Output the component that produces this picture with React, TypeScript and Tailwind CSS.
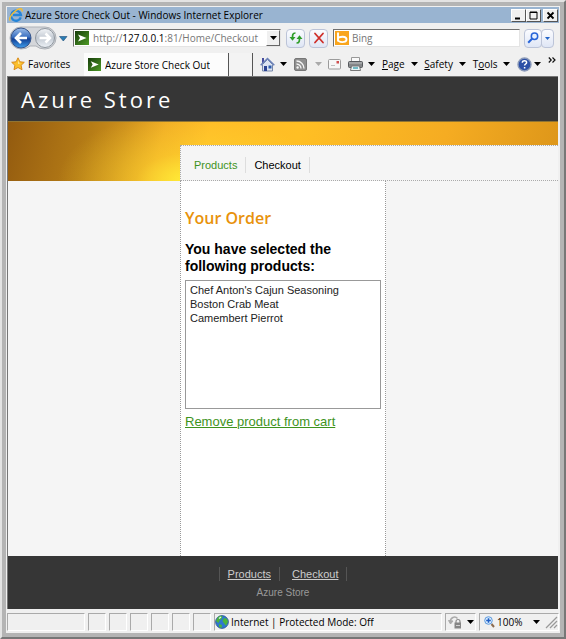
import type { ReactNode } from "react";

const ui = "font-['Open_Sans','Noto_Sans',sans-serif]";
const arial = "font-['Liberation_Sans',Arial,sans-serif]";

function Arrow({ className = "text-black" }: { className?: string }) {
  return (
    <svg width="7" height="4" viewBox="0 0 7 4" className={`shrink-0 ${className}`} aria-hidden="true">
      <path d="M0 0h7L3.5 4z" fill="currentColor" />
    </svg>
  );
}

function IeLogo() {
  return (
    <svg width="14" height="14" viewBox="0 0 14 14" className="shrink-0" aria-hidden="true">
      <path d="M11.8 9.3A5 5 0 1 1 12 7H4" fill="none" stroke="#2484d8" strokeWidth="2.3" />
      <path d="M1.2 12.5C-1 9.5 7 .2 12.3.8c1.2.4 1 1.8.5 2.7" fill="none" stroke="#f2bd32" strokeWidth="1.4" />
    </svg>
  );
}

function SiteIcon({ size }: { size: number }) {
  return (
    <svg width={size} height={size} viewBox="0 0 14 14" className="shrink-0" aria-hidden="true">
      <defs>
        <linearGradient id="site" x1="0" y1="0" x2="1" y2="1">
          <stop offset="0" stopColor="#173d0c" />
          <stop offset="1" stopColor="#4d9a25" />
        </linearGradient>
      </defs>
      <rect width="14" height="14" fill="url(#site)" />
      <path d="M3 3.5 11.5 7 3 10.5 5 7z" fill="#fff" />
    </svg>
  );
}

function HistoryButtons() {
  return (
    <svg width="60" height="24" viewBox="0 0 60 24" className="shrink-0" aria-hidden="true">
      <defs>
        <linearGradient id="back" x1="0" y1="0" x2="0" y2="1">
          <stop offset="0" stopColor="#9dbde8" />
          <stop offset=".45" stopColor="#3a6fc0" />
          <stop offset=".55" stopColor="#123f94" />
          <stop offset="1" stopColor="#3fa0ee" />
        </linearGradient>
        <linearGradient id="fwd" x1="0" y1="0" x2="0" y2="1">
          <stop offset="0" stopColor="#f2f4f7" />
          <stop offset=".5" stopColor="#c3cad3" />
          <stop offset="1" stopColor="#edf1f6" />
        </linearGradient>
      </defs>
      <path d="M12 1h24a11 11 0 0 1 0 22q-6 0-9-3h-6q-3 3-9 3a11 11 0 0 1 0-22z" fill="#d4d6da" stroke="#aeb2b8" />
      <circle cx="12" cy="12" r="10" fill="url(#back)" stroke="#35558c" />
      <circle cx="36" cy="12" r="9.5" fill="url(#fwd)" stroke="#8f979f" />
      <path d="M18 12H7M12 7l-5 5 5 5" fill="none" stroke="#fff" strokeWidth="2.6" />
      <path d="M30.500 12h10M36.500 7.500l4.500 4.500-4.500 4.500" fill="none" stroke="#fff" strokeWidth="2.5" />
      <path d="M50.500 10.500h7.500L54.300 15z" fill="#2a7db5" stroke="#1b4c77" strokeWidth=".6" />
    </svg>
  );
}

function Star() {
  return (
    <svg width="14" height="14" viewBox="0 0 14 14" className="shrink-0" aria-hidden="true">
      <path d="m7 .8 1.9 4 4.4.5-3.2 3 .9 4.4L7 10.500l-4 2.200.9-4.400-3.200-3 4.400-.5z" fill="#fbc02c" stroke="#d98b1b" />
      <path d="m7 3 1 2.800 2 .3-3 1z" fill="#ffe9a0" />
    </svg>
  );
}

function RefreshIcon() {
  return (
    <svg width="14" height="14" viewBox="0 0 14 14" aria-hidden="true">
      <path d="M6.500 2C3.500 2 3.500 4 3.500 7M7.500 12c3 0 3-2 3-5" fill="none" stroke="#2f9e2a" strokeWidth="1.7" />
      <path d="M.5 6h6L3.500 9.800zM7.500 8h6L10.500 4.200z" fill="#2f9e2a" />
    </svg>
  );
}

function StopIcon() {
  return (
    <svg width="12" height="12" viewBox="0 0 12 12" aria-hidden="true">
      <path d="m2 1.5 8 9M10 1.5l-8 9" stroke="#cf2f2a" strokeWidth="1.8" strokeLinecap="round" />
    </svg>
  );
}

function SearchIcon() {
  return (
    <svg width="12" height="12" viewBox="0 0 12 12" aria-hidden="true">
      <circle cx="7.5" cy="4.3" r="3.2" fill="#e5f0ff" stroke="#2764d8" strokeWidth="1.5" />
      <path d="M5 6.8 1.2 10.8" stroke="#2764d8" strokeWidth="2" />
    </svg>
  );
}

function BingIcon() {
  return (
    <svg width="14" height="14" viewBox="0 0 14 14" className="shrink-0" aria-hidden="true">
      <rect width="14" height="14" fill="#f9a51c" />
      <path d="M3 1.500v9M3.500 6.500c5-1.500 8-.5 8 2S7 12 3.500 10" fill="none" stroke="#fff" strokeWidth="1.9" />
    </svg>
  );
}

function HomeIcon() {
  return (
    <svg width="15" height="15" viewBox="0 0 15 15" aria-hidden="true">
      <path d="M2.500 7.500v6.500h10v-6.500l-5-5z" fill="#dce4f2" stroke="#7686a8" />
      <path d="M3 1v5" stroke="#343b94" strokeWidth="1.8" />
      <path d="M.7 8.200 7.500 1.500l6.800 6.700" fill="none" stroke="#6c82b8" strokeWidth="1.6" />
      <path d="M4 9h3v5H4z" fill="#2b4392" />
      <path d="M8.500 8.500h3v3h-3z" fill="#2d5cad" />
    </svg>
  );
}

function FeedIcon() {
  return (
    <svg width="13" height="13" viewBox="0 0 13 13" aria-hidden="true">
      <rect x=".5" y=".5" width="12" height="12" rx="1.5" fill="#8e8e8e" stroke="#777" />
      <path d="M2.500 6a4.500 4.500 0 0 1 4.500 4.500M2.500 3a7.500 7.500 0 0 1 7.500 7.500" fill="none" stroke="#f5f5f5" strokeWidth="1.3" />
      <circle cx="3.6" cy="9.5" r="1.2" fill="#f5f5f5" />
    </svg>
  );
}

function MailIcon() {
  return (
    <svg width="13" height="11" viewBox="0 0 13 11" aria-hidden="true">
      <rect x=".5" y=".5" width="12" height="9.5" rx="1" fill="#f7f7f7" stroke="#9b9b9b" />
      <rect x="8.5" y="2" width="2.5" height="2.5" fill="#cf4f4f" />
      <path d="M3 6.500h4" stroke="#c0c0c0" />
    </svg>
  );
}

function PrinterIcon() {
  return (
    <svg width="15" height="14" viewBox="0 0 15 14" aria-hidden="true">
      <path d="M3.500.5h8v5h-8z" fill="#fafafa" stroke="#999" />
      <rect x=".5" y="4.5" width="14" height="6" rx="1" fill="#858789" stroke="#55585c" />
      <path d="M1 6h13" stroke="#c0c2c4" />
      <path d="M3.500 9h8l1 4.500h-10z" fill="#e9f5f7" stroke="#777" />
      <path d="M5 11h5" stroke="#4aa6b4" strokeWidth="1.5" />
    </svg>
  );
}

function GlobeIcon() {
  return (
    <svg width="14" height="14" viewBox="0 0 14 14" className="shrink-0" aria-hidden="true">
      <circle cx="7" cy="7" r="6.4" fill="#2f77cf" stroke="#2a4f8f" strokeWidth=".8" />
      <path d="M3 2q3-2 4.500-.8L6.500 4l-2 1.500L3.500 8 1 6zM9 3l3 .8 1 3-2 4-2-2.500L7.500 6zM4 9l3 1-.5 3-2.500-1z" fill="#4bb53c" />
      <path d="M4 3.500 6 2" stroke="#d9f5ff" strokeWidth="1.2" />
    </svg>
  );
}

function ZoneLockIcon() {
  return (
    <svg width="14" height="13" viewBox="0 0 14 13" aria-hidden="true">
      <path d="M2.500 5.500a4 4 0 0 1 7-3" fill="none" stroke="#aaa" strokeWidth="1.5" />
      <path d="M.5 4.500 2.500 8 5 5z" fill="#aaa" stroke="#aaa" />
      <path d="M8 7V5.500a2 2 0 0 1 4 0V7" fill="none" stroke="#8a8a8a" strokeWidth="1.2" />
      <rect x="6.5" y="6.5" width="6.5" height="6" fill="#858585" />
      <path d="M8 9.500h4" stroke="#d0d0d0" />
    </svg>
  );
}

function ZoomIcon() {
  return (
    <svg width="11" height="12" viewBox="0 0 11 12" aria-hidden="true">
      <circle cx="4.5" cy="4.5" r="3.8" fill="#d9ecff" stroke="#5d9add" />
      <path d="M4.500 2.200v4.600M2.200 4.500h4.600" stroke="#1f5fc4" strokeWidth="1.5" />
      <path d="m7.500 8 2.500 3" stroke="#8b6a4e" strokeWidth="2" />
    </svg>
  );
}

function WindowButton({ label, children }: { label: string; children: ReactNode }) {
  return (
    <button
      type="button"
      aria-label={label}
      className="flex h-[13px] w-[15px] items-center justify-center border border-t-white border-r-[#555] border-b-[#555] border-l-white bg-[#f0f0f0]"
    >
      <svg width="9" height="9" viewBox="0 0 9 9" aria-hidden="true">
        {children}
      </svg>
    </button>
  );
}

function TitleBar() {
  return (
    <div className="flex h-4 items-center bg-[#99b4d1] pr-px pl-0.5">
      <IeLogo />
      <h1 className="ml-0.5 flex-1 truncate text-[10px] leading-4 text-black">
        Azure Store Check Out - Windows Internet Explorer
      </h1>
      <WindowButton label="Minimize">
        <path d="M1 7.500h5" stroke="#000" strokeWidth="2" />
      </WindowButton>
      <WindowButton label="Maximize">
        <path d="M1 1h7v7H1zM1 1.500h7" fill="none" stroke="#000" />
      </WindowButton>
      <div className="w-0.5" />
      <WindowButton label="Close">
        <path d="m1.500 1.500 6 6M7.500 1.500l-6 6" stroke="#000" strokeWidth="1.8" />
      </WindowButton>
    </div>
  );
}

const squareButton =
  "flex h-[19px] shrink-0 items-center justify-center rounded-sm border border-[#bcc4d8] bg-linear-to-b from-[#fbfcff] to-[#dfe6f5]";

function AddressRow() {
  return (
    <div className="flex h-[29px] items-center pt-px pr-[5px] pl-0.5">
      <HistoryButtons />
      <div className="ml-1 flex h-[18px] min-w-0 flex-1 items-center border border-t-[#707070] border-r-[#e4e4e4] border-b-[#e4e4e4] border-l-[#707070] bg-white pl-px">
        <SiteIcon size={14} />
        <button
          type="button"
          aria-label="Address"
          className="ml-1 flex-1 text-left text-[10px] leading-4 whitespace-nowrap text-[#777]"
        >
          http://<span className="text-black">127.0.0.1</span>:81/Home/Checkout
        </button>
        <button
          type="button"
          aria-label="Show addresses"
          className="flex h-4 w-[14px] items-center justify-center border border-t-white border-r-[#666] border-b-[#666] border-l-white bg-[#f0f0f0]"
        >
          <Arrow />
        </button>
      </div>
      <button type="button" aria-label="Refresh" className={`${squareButton} ml-[5px] w-[19px]`}>
        <RefreshIcon />
      </button>
      <button type="button" aria-label="Stop" className={`${squareButton} ml-1 w-[19px]`}>
        <StopIcon />
      </button>
      <label className="ml-[5px] flex h-[18px] w-[187px] shrink-0 items-center border border-t-[#707070] border-r-[#e4e4e4] border-b-[#e4e4e4] border-l-[#707070] bg-white pl-px">
        <BingIcon />
        <input
          type="text"
          aria-label="Search"
          placeholder="Bing"
          className="ml-[3px] w-full min-w-0 text-[10px] leading-4 outline-none placeholder:text-[#777]"
        />
      </label>
      <div className="ml-1 flex shrink-0">
        <button type="button" aria-label="Search the web" className={`${squareButton} w-[18px]`}>
          <SearchIcon />
        </button>
        <button type="button" aria-label="Search options" className={`${squareButton} -ml-px w-[13px]`}>
          <svg width="5" height="3" viewBox="0 0 5 3" aria-hidden="true">
            <path d="M0 0h5L2.500 3z" fill="#2264c8" />
          </svg>
        </button>
      </div>
    </div>
  );
}

function Menu({ before = "", letter, after }: { before?: string; letter: string; after: string }) {
  return (
    <button type="button" className="flex items-center gap-1.5">
      <span>
        {before}
        <span className="underline">{letter}</span>
        {after}
      </span>
      <Arrow />
    </button>
  );
}

function TabRow() {
  return (
    <div className="flex h-6 items-stretch pl-1 text-[10px] leading-4 text-black">
      <button type="button" className="flex w-[73px] items-center gap-[3px]">
        <Star />
        Favorites
      </button>
      <div className="flex h-[23px] w-[145px] items-center gap-1 self-end border-r border-[#555] bg-[#fcfcfc] pl-1">
        <SiteIcon size={13} />
        <span className="truncate">Azure Store Check Out</span>
      </div>
      <button
        type="button"
        aria-label="New tab"
        className="h-[23px] w-6 self-end border-r border-[#555] bg-[#f3f3f3]"
      />
      <div className="flex flex-1 items-center justify-between pr-[3px] pl-[7px]">
        <button type="button" aria-label="Home" className="flex items-center gap-[5px]">
          <HomeIcon />
          <Arrow />
        </button>
        <button type="button" aria-label="Feeds" className="flex items-center gap-2">
          <FeedIcon />
          <Arrow className="text-[#aaa]" />
        </button>
        <button type="button" aria-label="Read mail">
          <MailIcon />
        </button>
        <button type="button" aria-label="Print" className="flex items-center gap-[5px]">
          <PrinterIcon />
          <Arrow />
        </button>
        <Menu letter="P" after="age" />
        <Menu letter="S" after="afety" />
        <Menu before="T" letter="o" after="ols" />
        <button type="button" aria-label="Help" className="flex items-center gap-0.5">
          <svg width="15" height="15" viewBox="0 0 15 15" aria-hidden="true">
            <circle cx="7.5" cy="7.5" r="6.5" fill="#2c4fa6" stroke="#8b9ab8" strokeWidth="1.4" />
            <path d="M5.300 5.800c0-3 4.500-2.700 4.300-.2-.1 1.400-2 1.500-2 3M7.600 10v1.600" fill="none" stroke="#fff" strokeWidth="1.5" />
          </svg>
          <Arrow />
        </button>
        <button type="button" aria-label="More commands" className="mb-2">
          <svg width="8" height="6" viewBox="0 0 8 6" aria-hidden="true">
            <path d="m.8.5 2.400 2.500L.8 5.500M4.500.5 7 3 4.500 5.500" fill="none" stroke="#111" strokeWidth="1.2" />
          </svg>
        </button>
      </div>
    </div>
  );
}

function StorePage() {
  return (
    <div className={`mr-px flex flex-1 flex-col border-t border-l border-[#777] bg-[#f5f5f5] ${arial}`}>
      <header>
        <div className="flex h-11 items-center bg-[#363636] pl-[13px]">
          <h2 className="font-['Open_Sans','Noto_Sans',sans-serif] text-[22px] leading-6 tracking-[3px] text-white">
            Azure Store
          </h2>
        </div>
        <div className="flex h-[60px] items-end border-t border-[#8f7434] bg-[radial-gradient(ellipse_130px_70px_at_180px_100%,#ffee38,#ffe13266_40%,#ffc82a00),linear-gradient(105deg,#925a0f,#a56c13_8%,#b57c16_15%,#cd8f1c_21%,#f0aa25_28%,#ffbb27_36%,#ffbf24_52%,#f5ac22_78%,#dc9519)] pl-[172px]">
          <nav className="flex h-9 flex-1 items-center border border-r-0 border-dotted border-[#aaa] bg-[#f5f5f5] pt-[3px] pl-1 text-[11px] leading-4">
            <a href="#products" className="border-r border-[#ddd] px-2 pl-[9px] text-[#3e931c]">
              Products
            </a>
            <a href="#checkout" className="border-r border-[#ddd] px-2 text-black">
              Checkout
            </a>
          </nav>
        </div>
      </header>
      <div className="flex flex-1 pl-[172px]">
        <main className="w-[206px] border-x border-dotted border-[#999] bg-white px-1 pt-[25px]">
          <h3 className="font-['Open_Sans','Noto_Sans',sans-serif] text-base leading-6 font-semibold text-[#e8920c]">
            Your Order
          </h3>
          <label htmlFor="order" className="mt-[11px] block text-sm leading-[17px] font-bold text-black">
            You have selected the following products:
          </label>
          <select
            id="order"
            multiple
            className="mt-[5px] block h-[129px] w-full overflow-hidden border border-[#999] bg-white px-1 py-[3px] text-[11px] leading-[14px] text-[#222] outline-none"
          >
            <option className="block h-[14px] p-0">Chef Anton's Cajun Seasoning</option>
            <option className="block h-[14px] p-0">Boston Crab Meat</option>
            <option className="block h-[14px] p-0">Camembert Pierrot</option>
          </select>
          <a href="#remove" className="mt-1 block text-[13px] leading-[18px] text-[#3e931c] underline">
            Remove product from cart
          </a>
        </main>
      </div>
      <footer className="flex h-[53px] flex-col items-center bg-[#363636] pt-[11px] text-[#999]">
        <nav className="flex text-[11px] leading-[14px] text-[#ccc]">
          <a href="#products" className="border-x border-[#555] px-2 underline">
            Products
          </a>
          <a href="#checkout" className="border-r border-[#555] pr-2 pl-3 underline">
            Checkout
          </a>
        </nav>
        <p className="mt-1 text-[10px] leading-4">Azure Store</p>
      </footer>
    </div>
  );
}

const pane = "flex h-[18px] items-center border border-t-[#aaa] border-l-[#aaa] border-r-white border-b-white";

function StatusBar() {
  return (
    <div className="mt-1 flex h-[19px] gap-[3px] text-[10px] leading-4 text-black">
      <div className={`${pane} w-[78px]`} />
      {[0, 1, 2, 3, 4, 5].map((n) => (
        <div key={n} className={`${pane} w-[18px]`} />
      ))}
      <div className={`${pane} min-w-0 flex-1 gap-0.5`}>
        <GlobeIcon />
        <span className="truncate">Internet | Protected Mode: Off</span>
      </div>
      <button type="button" aria-label="Privacy" className={`${pane} w-[31px] gap-[5px] pl-0.5`}>
        <ZoneLockIcon />
        <Arrow />
      </button>
      <div className={`${pane} w-20`}>
        <button type="button" className="flex flex-1 items-center pl-1">
          <ZoomIcon />
          <span className="ml-0.5 flex-1 text-left">100%</span>
          <Arrow />
        </button>
        <svg width="14" height="14" viewBox="0 0 14 14" className="ml-1 shrink-0" aria-hidden="true">
          <path d="M2 13 13 2M6 13l7-7M10 13l3-3" stroke="#999" strokeWidth="1.3" />
        </svg>
      </div>
    </div>
  );
}

export default function App() {
  return (
    <div
      className={`flex min-h-screen flex-col border-2 border-t-[#e3e3e3] border-r-[#777] border-b-[#777] border-l-[#e3e3e3] bg-[#f0f0f0] ${ui}`}
    >
      <div className="flex flex-1 flex-col border-[4px] border-[#b4b4b4] p-px">
        <TitleBar />
        <AddressRow />
        <TabRow />
        <StorePage />
        <StatusBar />
      </div>
    </div>
  );
}
